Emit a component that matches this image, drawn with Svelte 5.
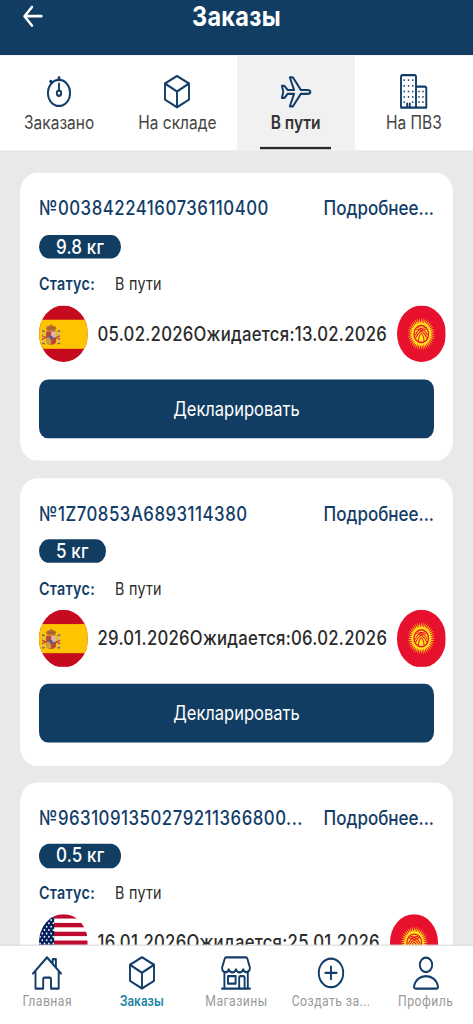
<script>
  const tabs = [
    { label: 'Заказано', icon: 'timer' },
    { label: 'На складе', icon: 'cube' },
    { label: 'В пути', icon: 'plane', active: true },
    { label: 'На ПВЗ', icon: 'building' }
  ];
  const orders = [
    { number: '№00384224160736110400', weight: '9.8 кг', from: 'es', sent: '05.02.2026', due: '13.02.2026', declarable: true },
    { number: '№1Z70853A6893114380', weight: '5 кг', from: 'es', sent: '29.01.2026', due: '06.02.2026', declarable: true },
    { number: '№9631091350279211366800...', weight: '0.5 кг', from: 'us', sent: '16.01.2026', due: '25.01.2026', declarable: false }
  ];
  const nav = [
    { label: 'Главная', icon: 'home' },
    { label: 'Заказы', icon: 'cube', active: true },
    { label: 'Магазины', icon: 'shop' },
    { label: 'Создать за...', icon: 'plus' },
    { label: 'Профиль', icon: 'person' }
  ];
  const rays = Array.from({ length: 40 }, (_, i) => i * 9);
  const stars = Array.from({ length: 9 }, (_, r) =>
    Array.from({ length: r % 2 ? 3 : 4 }, (_, c) => [1 + c * 4.4 + (r % 2 ? 2.2 : 0), 2 + r * 2.85])
  ).flat();
  const windows = [4.5, 9.4, 14.2, 18.8, 23.2];
</script>

{#snippet icon(name)}
  <svg class="icon" width="30" height="30" viewBox="0 0 30 30">
    {#if name === 'timer'}
      <circle cx="15" cy="16.1" r="11.1" />
      <path d="M15 8.2v5.6M15 3v1.6M6.7 6.300l1.2 1.3" />
      <circle class="fill" cx="15" cy="3.300" r="1.500" /><circle class="fill" cx="6.800" cy="6.300" r="1.500" />
      <circle cx="15" cy="16.300" r="2.200" />
    {:else if name === 'cube'}
      <path d="M15 1.7 27 8v13.8L15 28.3 3 21.8V8ZM3 8l12 6.8L27 8M15 14.8v13.5" />
    {:else if name === 'plane'}
      <path d="M.9 10.1h2.6l3.2 3.5h6.4L8.8 2.9h3.1l8 10.7h6.3c1.8 0 3.2.7 3.2 1.6s-1.4 1.6-3.2 1.6h-6.3l-8 10.7H8.8l4.3-10.7H6.7l-3.2 3.5H.9l1.4-5.1Z" />
    {:else if name === 'building'}
      <path d="M2 28.500V2.4q0-1.5 1.5-1.5h12Q17 .9 17 2.4V28.500ZM17 10.800h8.700q1.600 0 1.600 1.600V28.500H17M8.200 28.500v-3.300M10.800 28.500v-3.300" />
      {#each windows as y}
        {#each [4.5, 8.8, 13.1] as x}
          {#if !(y === 23.2 && x === 8.8)}<rect class="fill" {x} {y} width="1.400" height="1.400" />{/if}
        {/each}
      {/each}
      {#each windows.slice(2) as y}
        <rect class="fill" x="19.3" {y} width="1.4" height="1.4" /><rect class="fill" x="23.2" {y} width="1.4" height="1.4" />
      {/each}
    {:else if name === 'home'}
      <path d="M1 15.5 15 1.8 29 15.5M3.5 13.4v14.9h7.7v-8q0-1.3 1.3-1.3h5.2q1.3 0 1.3 1.3v8h7.7V13.4M20.7 6.8V3.3h3.2v6.9" />
    {:else if name === 'shop'}
      <path d="M5.3 1.800h19.500q1.200 0 1.600 1.200l2.500 7.300c0 4.800-5.700 5-6.700 1.700-1.200 3.300-6 3.300-7.200 0-1.200 3.300-6 3.300-7.200 0-1 3.500-6.700 3.300-6.700-1.700L3.700 3q.4-1.200 1.600-1.200ZM3.400 14.600v13.300M26.800 14.600v13.300M1 28.300h28M7 17.700h7.600v6.500H7ZM18.200 28v-9q0-1.300 1.200-1.300h3q1.200 0 1.200 1.300v9" />
    {:else if name === 'plus'}
      <circle cx="15" cy="15" r="12.2" />
      <path d="M15 9.6v10.8M9.4 15h11.2" />
    {:else}
      <circle cx="15" cy="8.2" r="6.2" />
      <path d="M4.700 28.300c-1 0-1.700-.6-1.700-1.600C4 21 9 17.700 15 17.700S26 21 27 26.700c0 1-.7 1.600-1.700 1.600Z" />
    {/if}
  </svg>
{/snippet}

{#snippet flag(code)}
  <svg class="flag" viewBox="0 0 48 48">
    {#if code === 'es'}
      <rect width="48" height="48" fill="#c60b1e" /><rect y="12" width="48" height="24.500" fill="#ffc400" />
      <g>
        <path d="M7 19.200q0-2 5-2.300 5 .3 5 2.300l-1.200 2.500H8.200Z" fill="#b96d39" />
        <path d="M12 15.800v2M8.700 19h6.700" stroke="#8b5a2e" stroke-width=".8" />
        <path d="M7 22h10v7.500q0 3.500-5 3.500t-5-3.500Z" fill="#b8463a" />
        <path d="M12 22h5v5h-5Z" fill="#d8b7ad" /><path d="M7 27h5v5.800q-5-.4-5-3.300Z" fill="#d29b3e" />
        <circle cx="12" cy="27" r="1.600" fill="#485d9f" />
        <path d="M4.400 22v9M19.600 22v9" stroke="#c8b5a0" stroke-width="1.500" />
        <path d="M3 21.500h2.800M18.200 21.500H21M3 32h2.800M18.200 32H21" stroke="#746e69" stroke-width="1.300" />
        <path d="m3 25.500 4 1.500-4 1.500M21 25.500 17 27l4 1.500" stroke="#b44c32" fill="none" />
      </g>
    {:else if code === 'kg'}
      <rect width="48" height="48" fill="#e8112d" />
      <g transform="translate(24 24)">
        {#each rays as a}<path d="M-.7-8.500 0-13.900.7-8.500Z" fill="#ffe51a" transform="rotate({a})" />{/each}
        <circle r="9.500" fill="#ffdf17" /><circle r="7.800" fill="#e8112d" />
        <circle r="6.600" fill="#ffe11a" />
        <path d="M-6 1Q-3-5 3.600-5.300M-5.500 3.200Q-1.500-3.800 5-4M-3.600-5.300Q3-5 6 1M-5-4Q1.500-3.800 5.500 3.200M-2.800 6Q-2.500 1 0-.5 2.500 1 2.800 6" fill="none" stroke="#e8112d" stroke-width=".9" />
      </g>
    {:else}
      <rect width="48" height="48" fill="#fff" />
      {#each [0, 1, 2, 3, 4, 5, 6] as i}<rect y={i * 7.4} width="48" height="3.700" fill="#bf0a30" />{/each}
      <rect width="15" height="26" fill="#00205b" />
      {#each stars as s}<circle cx={s[0]} cy={s[1]} r=".85" fill="#fff" />{/each}
    {/if}
  </svg>
{/snippet}

<div class="screen">
  <header>
    <svg class="back" width="20" height="20" viewBox="0 0 20 20"><path d="M18.500 9.800H2M9 2 1.500 9.800 9 17.800" /></svg>
    <h1>Заказы</h1>
  </header>
  <div class="tabs">
    {#each tabs as t}
      <div class="tab" class:active={t.active}>
        {@render icon(t.icon)}
        <span class="label">{t.label}</span>
      </div>
    {/each}
  </div>
  <main>
    {#each orders as o}
      <article>
        <div class="top"><span class="number">{o.number}</span><span class="more">Подробнее...</span></div>
        <div class="pill">{o.weight}</div>
        <div class="status"><b>Статус:</b><span>В пути</span></div>
        <div class="route">
          {@render flag(o.from)}
          <span class="dates">{o.sent}Ожидается:{o.due}</span>
          {@render flag('kg')}
        </div>
        {#if o.declarable}<button>Декларировать</button>{/if}
      </article>
    {/each}
  </main>
  <nav>
    {#each nav as n}
      <div class="item" class:active={n.active}>
        {@render icon(n.icon)}
        <span>{n.label}</span>
      </div>
    {/each}
  </nav>
</div>

<style>
  :global(body) { overflow: hidden; }
  :global(#app) { height: 1024px; overflow: hidden; }
  .screen {
    width: 473px;
    height: 871.5px;
    display: flex;
    flex-direction: column;
    overflow: hidden;
    background: #e9e9e9;
    font-family: Inter, "Liberation Sans", sans-serif;
    transform: scaleY(1.175);
    transform-origin: 0 0;
  }
  header {
    height: 47.2px;
    flex: none;
    display: grid;
    grid-template-columns: 60px 1fr 60px;
    background: #123d63;
    color: #fff;
  }
  .back { margin: 3.5px 0 0 23px; fill: none; stroke: #fff; stroke-width: 2.3; stroke-linecap: round; stroke-linejoin: round; }
  h1 { margin: 0; font-size: 23.5px; line-height: 28.5px; font-weight: 700; text-align: center; letter-spacing: 0.3px; }
  .icon { display: block; flex: none; fill: none; stroke: #123d68; stroke-width: 1.9; stroke-linecap: round; stroke-linejoin: round; overflow: visible; }
  .icon .fill { fill: #123d68; stroke: none; }
  .tabs { height: 80.5px; flex: none; display: grid; grid-template-columns: repeat(4, 1fr); background: #fff; }
  .tab { display: flex; flex-direction: column; align-items: center; padding-top: 16px; box-sizing: border-box; color: #444; }
  .tab.active { background: #f1f1f1 linear-gradient(#2b2b2b, #2b2b2b) center bottom / 71px 2.4px no-repeat; color: #333; }
  .label { margin-top: 1.4px; font-size: 15.5px; line-height: 20px; white-space: nowrap; }
  .tab.active .label { font-weight: 600; }
  main { flex: 1; min-height: 0; overflow: hidden; display: flex; flex-direction: column; gap: 14.2px; padding: 19.8px 20px 0; }
  article { flex: none; box-sizing: border-box; height: 244.95px; padding: 18px 19px 0; border-radius: 17px; background: #fff; }
  .top { display: flex; justify-content: space-between; height: 24px; line-height: 24px; font-size: 17px; font-weight: 500; color: #123d68; white-space: nowrap; }
  .number { font-size: 16.8px; letter-spacing: 0.52px; }
  .pill { width: max-content; margin-top: 10.3px; padding: 0 17px; height: 20.5px; line-height: 20.5px; border-radius: 11px; background: #123d63; color: #fff; font-size: 17px; font-weight: 500; letter-spacing: 0.15px; }
  .status { display: flex; gap: 20px; margin-top: 11.5px; line-height: 20px; font-size: 14.3px; letter-spacing: 0.28px; color: #2b2b2b; }
  .status b { font-weight: 600; color: #123d68; }
  .route { display: flex; align-items: center; gap: 10px; margin-top: 8.2px; height: 48.5px; }
  .flag { width: 48.5px; height: 48.5px; flex: none; border-radius: 50%; }
  .dates { flex: none; font-size: 16.7px; font-weight: 500; letter-spacing: 0.28px; color: #2b2b2b; white-space: nowrap; }
  button { display: block; width: 100%; height: 50px; margin: 14.5px 0 0; padding: 0; border: 0; border-radius: 9px; background: #123d63; color: #fff; font: 400 16.5px Inter, sans-serif; }
  nav { flex: none; height: 66.8px; display: grid; grid-template-columns: repeat(5, 1fr); background: #fff; box-shadow: 0 -1px 1px #ddd; position: relative; }
  .item { display: flex; flex-direction: column; align-items: center; padding-top: 8.2px; font: 400 12.2px Roboto, sans-serif; line-height: 18px; color: #999; white-space: nowrap; }
  .item span { margin-top: 0.5px; letter-spacing: 0.45px; }
  .item.active span { color: #15809f; font-weight: 500; letter-spacing: 0.1px; }
</style>
